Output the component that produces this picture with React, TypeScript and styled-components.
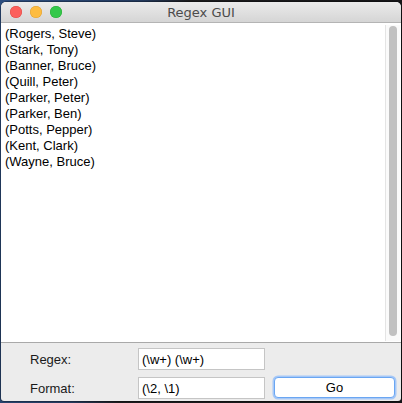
import React from "react";
import styled, { createGlobalStyle } from "styled-components";

const Global = createGlobalStyle`
  html, body { margin: 0; padding: 0; }
  body {
    width: 402px;
    height: 403px;
    overflow: hidden;
    background: linear-gradient(100deg, #2d4f80 0%, #23395c 30%, #1b1b1d 40%, #141416 100%);
    font-family: "Lucida Grande", "DejaVu Sans", "Noto Sans", sans-serif;
  }
`;

const Window = styled.div`
  margin: 2px 1px 0 1px;
  width: 400px;
  height: 399px;
  display: flex;
  flex-direction: column;
  border-radius: 5px 5px 3px 3px;
  overflow: hidden;
  background: #ececec;
  box-shadow: 0 0 0 0.5px rgba(0, 0, 0, 0.5);
`;

const TitleBar = styled.div`
  height: 20px;
  flex: none;
  display: flex;
  align-items: center;
  position: relative;
  background: linear-gradient(#ebebeb, #d5d5d5);
  border-bottom: 1px solid #b4b4b4;
`;

const Lights = styled.div`
  display: flex;
  gap: 8px;
  padding-left: 9px;
`;

const Light = styled.span<{ $c: string; $b: string }>`
  width: 12px;
  height: 12px;
  border-radius: 50%;
  background: ${(p) => p.$c};
  box-shadow: inset 0 0 0 0.5px ${(p) => p.$b};
`;

const Title = styled.div`
  position: absolute;
  left: 0;
  right: 0;
  text-align: center;
  font-size: 13px;
  color: #4c4c4c;
  pointer-events: none;
`;

const Content = styled.div`
  flex: 1;
  display: flex;
  background: #fff;
  border-bottom: 1px solid #a9a9a9;
  min-height: 0;
`;

const TextArea = styled.div`
  flex: 1;
  padding: 3px 0 0 4px;
  font-family: "Liberation Sans", Arial, sans-serif;
  font-size: 13px;
  line-height: 16px;
  color: #000;
`;

const Line = styled.div`
  white-space: pre;
`;

const ScrollTrack = styled.div`
  width: 14px;
  flex: none;
  margin: 2px 1px 1px 0;
  border-left: 1px solid #e4e4e4;
  background: #fafafa;
  display: flex;
  justify-content: center;
  padding: 1px 0 5px;
`;

const Thumb = styled.div`
  width: 8px;
  border-radius: 4px;
  background: #c1c1c1;
`;

const Form = styled.div`
  height: 58px;
  box-sizing: border-box;
  flex: none;
  display: grid;
  grid-template-columns: 128px 127px 121px;
  grid-template-rows: 22px 22px;
  column-gap: 9px;
  row-gap: 7px;
  padding: 5px 0 0 0;
  align-items: center;
  font-family: "Liberation Sans", Arial, sans-serif;
  font-size: 13px;
`;

const Label = styled.div`
  padding-left: 29px;
  color: #1a1a1a;
`;

const Field = styled.div`
  height: 22px;
  box-sizing: border-box;
  border: 1px solid #c5c5c5;
  background: #fff;
  padding: 0 3px;
  display: flex;
  align-items: center;
  color: #000;
`;

const Button = styled.button`
  height: 21px;
  box-sizing: border-box;
  border: 1px solid #6aa6f2;
  box-shadow: 0 0 0 1.5px #a6c8f7;
  border-radius: 4px;
  background: #fff;
  font-family: "Liberation Sans", Arial, sans-serif;
  font-size: 13px;
  color: #000;
  padding: 0;
  align-self: start;
`;

const names = [
  "(Rogers, Steve)",
  "(Stark, Tony)",
  "(Banner, Bruce)",
  "(Quill, Peter)",
  "(Parker, Peter)",
  "(Parker, Ben)",
  "(Potts, Pepper)",
  "(Kent, Clark)",
  "(Wayne, Bruce)",
];

export default function App() {
  return (
    <>
      <Global />
      <Window>
        <TitleBar>
          <Lights>
            <Light $c="#fc605c" $b="#de4a45" />
            <Light $c="#fdbc40" $b="#de9f34" />
            <Light $c="#34c84a" $b="#27aa35" />
          </Lights>
          <Title>Regex GUI</Title>
        </TitleBar>
        <Content>
          <TextArea>
            {names.map((n) => (
              <Line key={n}>{n}</Line>
            ))}
          </TextArea>
          <ScrollTrack>
            <Thumb style={{ height: "100%" }} />
          </ScrollTrack>
        </Content>
        <Form>
          <Label>Regex:</Label>
          <Field>(\w+) (\w+)</Field>
          <div />
          <Label>Format:</Label>
          <Field>(\2, \1)</Field>
          <Button>Go</Button>
        </Form>
      </Window>
    </>
  );
}
